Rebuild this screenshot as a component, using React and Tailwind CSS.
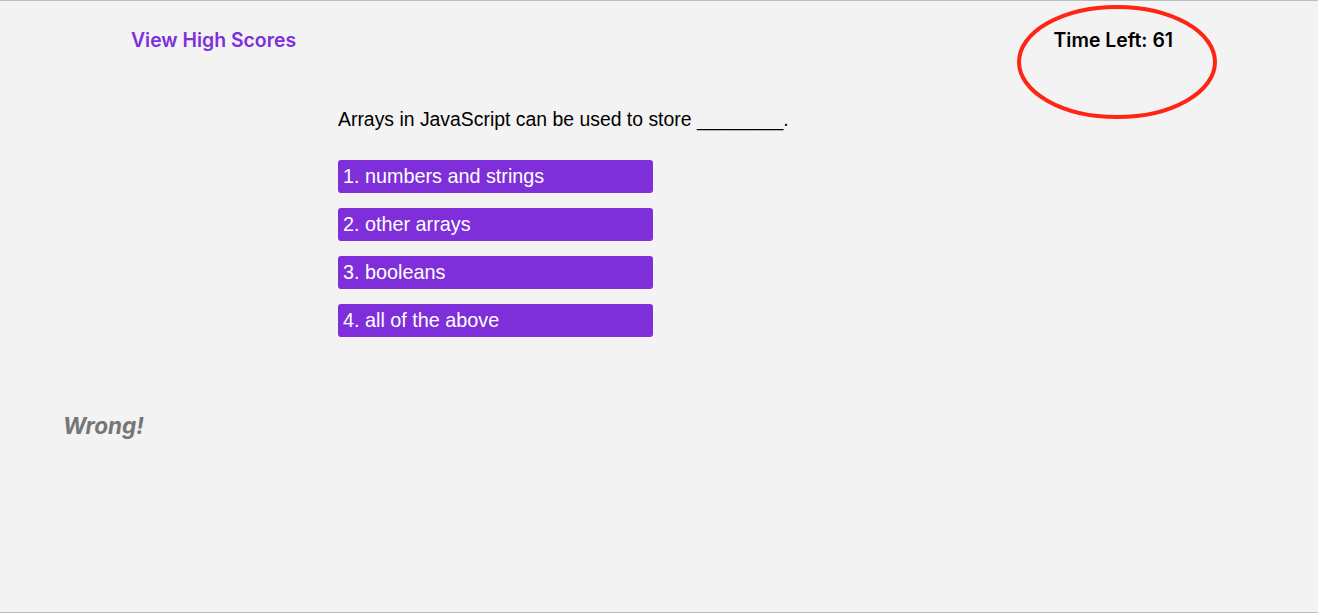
import React from 'react'

const answers = ['1. numbers and strings', '2. other arrays', '3. booleans', '4. all of the above']

export default function App() {
  return (
    <div className="h-[613px] bg-[#f3f3f3] border-t border-b border-[#bdbdbd] flex flex-col" style={{ fontFamily: '"Liberation Sans", Arial, sans-serif' }}>
      <header className="flex justify-between items-center pl-[131px] pr-[145px] pt-[27px]" style={{ fontFamily: 'Inter, sans-serif' }}>
        <a className="text-[19.4px] font-semibold text-[#7e2fd9] leading-[24px]">View High Scores</a>
        <div className="relative text-[19.4px] font-semibold text-black leading-[24px]">
          Time Left: 61
          <svg className="absolute left-[-38px] top-[-28px] pointer-events-none" width="204" height="124" viewBox="0 0 204 124">
            <ellipse cx="101" cy="62" rx="98" ry="55" fill="none" stroke="#ff2414" strokeWidth="4" />
          </svg>
        </div>
      </header>

      <main className="pl-[338px] pt-[55px]">
        <h2 className="text-[19.4px] leading-[24px] text-black">Arrays in JavaScript can be used to store ________.</h2>
        <div className="flex flex-col gap-[15px] mt-[29px]">
          {answers.map(a => (
            <button key={a} className="w-[315px] h-[33px] bg-[#7e2fd9] rounded-[3px] text-white text-[19.8px] text-left pl-[5px]">
              {a}
            </button>
          ))}
        </div>
      </main>

      <p className="pl-[63px] mt-[75px] text-[22.5px] font-bold italic text-[#767676] leading-[28px]" style={{ fontFamily: 'Inter, sans-serif' }}>Wrong!</p>
    </div>
  )
}
